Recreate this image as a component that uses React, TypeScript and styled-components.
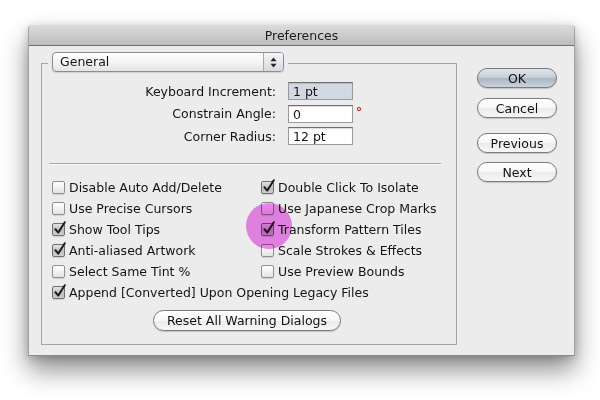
import { FC } from "react";
import styled, { createGlobalStyle, css } from "styled-components";

const GlobalStyle = createGlobalStyle`
    html, body {
        margin: 0;
        padding: 0;
        background: #ffffff;
    }

    body {
        font-family: "Lucida Grande", "DejaVu Sans", sans-serif;
        font-size: 12.5px;
        color: #141414;
    }
`;

const Page = styled.div`
    width: 600px;
    height: 400px;
    padding: 25px 0 0 28px;
    box-sizing: border-box;
    overflow: hidden;
`;

const Window = styled.div`
    position: relative;
    width: 547px;
    height: 331px;
    box-sizing: border-box;
    display: flex;
    flex-direction: column;
    background: #ececec;
    border: 1px solid #a2a2a2;
    border-top: none;
    border-bottom-color: #8a8a8a;
    border-radius: 4px 4px 0 0;
    box-shadow: 0 14px 26px rgba(0, 0, 0, 0.45), 0 2px 8px rgba(0, 0, 0, 0.18);
`;

const TitleBar = styled.div`
    height: 20px;
    display: flex;
    align-items: center;
    justify-content: center;
    border-bottom: 1px solid #6f6f6f;
    border-radius: 4px 4px 0 0;
    background: linear-gradient(#dcdcdc, #bdbdbd);
    color: #1c1c1c;
    font-size: 12.5px;
`;

const Body = styled.div`
    flex: 1;
    display: flex;
    align-items: flex-start;
    padding: 17px 17px 9px 12px;
`;

const Group = styled.div`
    width: 416px;
    box-sizing: border-box;
    display: flex;
    flex-direction: column;
    border: 1px solid #a4a4a4;
    padding-bottom: 13px;
`;

const Legend = styled.div`
    align-self: flex-start;
    margin: -12px 0 0 6px;
    padding: 0 4px;
    background: #ececec;
`;

const Popup = styled.div`
    width: 232px;
    height: 20px;
    box-sizing: border-box;
    display: flex;
    border: 1px solid #8e8e8e;
    border-radius: 4px;
    background: linear-gradient(#ffffff, #f1f1f1 60%, #e4e4e4);
    box-shadow: 0 1px 1px rgba(0, 0, 0, 0.12);

    .value {
        flex: 1;
        padding-left: 7px;
        line-height: 18px;
    }

    .arrows {
        width: 19px;
        display: flex;
        align-items: center;
        justify-content: center;
        border-left: 1px solid #a9a9a9;
        border-radius: 0 3px 3px 0;
        background: linear-gradient(#f4f6f8, #d6dbe1);
    }
`;

const Fields = styled.div`
    display: flex;
    flex-direction: column;
    gap: 4.5px;
    margin-top: 10px;
`;

const FieldRow = styled.div`
    display: flex;
    align-items: center;
    height: 18px;
`;

const FieldLabel = styled.span`
    width: 234px;
    margin-right: 12px;
    text-align: right;
`;

const Field = styled.div<{ disabled?: boolean }>`
    width: 65px;
    height: 18px;
    box-sizing: border-box;
    padding-left: 4px;
    line-height: 17px;
    border: 1px solid #9a9a9a;
    border-top-color: #6e6e6e;
    background: ${(props) => (props.disabled ? "#d2d9e2" : "#ffffff")};
    box-shadow: inset 0 1px 1px rgba(0, 0, 0, 0.15);
`;

const Degree = styled.span`
    align-self: flex-start;
    margin: 0 0 0 3px;
    color: #c8101a;
    font-size: 12px;
    font-weight: bold;
`;

const Separator = styled.div`
    height: 1px;
    margin: 18px 15px 0 7px;
    background: #a8a8a8;
    box-shadow: 0 1px 0 #f8f8f8;
`;

const CheckGrid = styled.div`
    display: grid;
    grid-template-columns: 209px 1fr;
    grid-auto-rows: 21px;
    margin-top: 13px;
    padding-left: 10px;
`;

const CheckRow = styled.label<{ wide?: boolean }>`
    display: flex;
    align-items: center;
    gap: 4px;
    white-space: nowrap;
    ${(props) =>
        props.wide &&
        css`
            grid-column: 1 / span 2;
        `}
`;

const Box = styled.span<{ checked: boolean }>`
    position: relative;
    width: 13px;
    height: 13px;
    flex: none;
    box-sizing: border-box;
    border-radius: 2px;
    border: 1px solid ${(props) => (props.checked ? "#6f6f6f" : "#8f8f8f")};
    background: ${(props) =>
        props.checked
            ? "linear-gradient(#e4e4e4, #bdbdbd 55%, #cfcfcf)"
            : "linear-gradient(#ffffff, #f2f2f2 50%, #e3e3e3)"};
    box-shadow: 0 1px 1px rgba(0, 0, 0, 0.12);

    svg {
        position: absolute;
        left: 0;
        top: -3px;
        overflow: visible;
    }
`;

const ResetRow = styled.div`
    display: flex;
    justify-content: center;
    margin-top: 7px;
    padding-right: 4px;
`;

const PillButton = styled.button<{ primary?: boolean }>`
    height: 21px;
    margin: 0;
    box-sizing: border-box;
    padding: 0 13px;
    font-family: inherit;
    font-size: 12.5px;
    color: #111;
    border: 1px solid #7b7b7b;
    border-radius: 11px;
    background: ${(props) =>
        props.primary
            ? "linear-gradient(#e1e6ec, #c3ccd6 50%, #aab6c3 51%, #c9d2dc)"
            : "linear-gradient(#ffffff, #f7f7f7 50%, #ebebeb 51%, #f6f6f6)"};
    box-shadow: 0 1px 1px rgba(0, 0, 0, 0.18);
`;

const ButtonColumn = styled.div`
    display: flex;
    flex-direction: column;
    margin-left: 20px;
    padding-top: 5px;

    button {
        width: 80px;
        height: 20px;
        padding: 0;
    }

    .cancel {
        margin-top: 10px;
    }

    .previous {
        margin-top: 15px;
    }

    .next {
        margin-top: 9px;
    }
`;

// pink click marker, multiplied so the control under it stays readable
const Highlight = styled.div`
    position: absolute;
    left: 217px;
    top: 178px;
    width: 46px;
    height: 46px;
    border-radius: 50%;
    background: radial-gradient(
        circle,
        #f28af2 0%,
        #f088f0 78%,
        #d970d9 100%
    );
    mix-blend-mode: multiply;
    pointer-events: none;
`;

const CheckMark: FC = () => (
    <svg width='14' height='14' viewBox='0 0 14 14'>
        <path
            d='M2.4 8.2 L5.2 11.6 L11.8 1.2'
            fill='none'
            stroke='#1d1d1d'
            strokeWidth='2'
            strokeLinecap='round'
            strokeLinejoin='round'
        />
    </svg>
);

interface CheckItemProps {
    label: string;
    checked?: boolean;
    wide?: boolean;
}

const CheckItem: FC<CheckItemProps> = ({ label, checked = false, wide }) => (
    <CheckRow wide={wide}>
        <Box checked={checked}>{checked && <CheckMark />}</Box>
        {label}
    </CheckRow>
);

const PopupArrows: FC = () => (
    <svg width='7' height='11' viewBox='0 0 7 11'>
        <path d='M3.5 0.5 L6.5 4.2 L0.5 4.2 Z' fill='#222' />
        <path d='M3.5 10.5 L6.5 6.8 L0.5 6.8 Z' fill='#222' />
    </svg>
);

const App: FC = () => {
    return (
        <Page>
            <GlobalStyle />
            <Window>
                <TitleBar>Preferences</TitleBar>
                <Body>
                    <Group>
                        <Legend>
                            <Popup>
                                <div className='value'>General</div>
                                <div className='arrows'>
                                    <PopupArrows />
                                </div>
                            </Popup>
                        </Legend>
                        <Fields>
                            <FieldRow>
                                <FieldLabel>Keyboard Increment:</FieldLabel>
                                <Field disabled>1 pt</Field>
                            </FieldRow>
                            <FieldRow>
                                <FieldLabel>Constrain Angle:</FieldLabel>
                                <Field>0</Field>
                                <Degree>°</Degree>
                            </FieldRow>
                            <FieldRow>
                                <FieldLabel>Corner Radius:</FieldLabel>
                                <Field>12 pt</Field>
                            </FieldRow>
                        </Fields>
                        <Separator />
                        <CheckGrid>
                            <CheckItem label='Disable Auto Add/Delete' />
                            <CheckItem label='Double Click To Isolate' checked />
                            <CheckItem label='Use Precise Cursors' />
                            <CheckItem label='Use Japanese Crop Marks' />
                            <CheckItem label='Show Tool Tips' checked />
                            <CheckItem label='Transform Pattern Tiles' checked />
                            <CheckItem label='Anti-aliased Artwork' checked />
                            <CheckItem label='Scale Strokes & Effects' />
                            <CheckItem label='Select Same Tint %' />
                            <CheckItem label='Use Preview Bounds' />
                            <CheckItem
                                label='Append [Converted] Upon Opening Legacy Files'
                                checked
                                wide
                            />
                        </CheckGrid>
                        <ResetRow>
                            <PillButton>Reset All Warning Dialogs</PillButton>
                        </ResetRow>
                    </Group>
                    <ButtonColumn>
                        <PillButton primary>OK</PillButton>
                        <PillButton className='cancel'>Cancel</PillButton>
                        <PillButton className='previous'>Previous</PillButton>
                        <PillButton className='next'>Next</PillButton>
                    </ButtonColumn>
                </Body>
                <Highlight />
            </Window>
        </Page>
    );
};

export default App;
